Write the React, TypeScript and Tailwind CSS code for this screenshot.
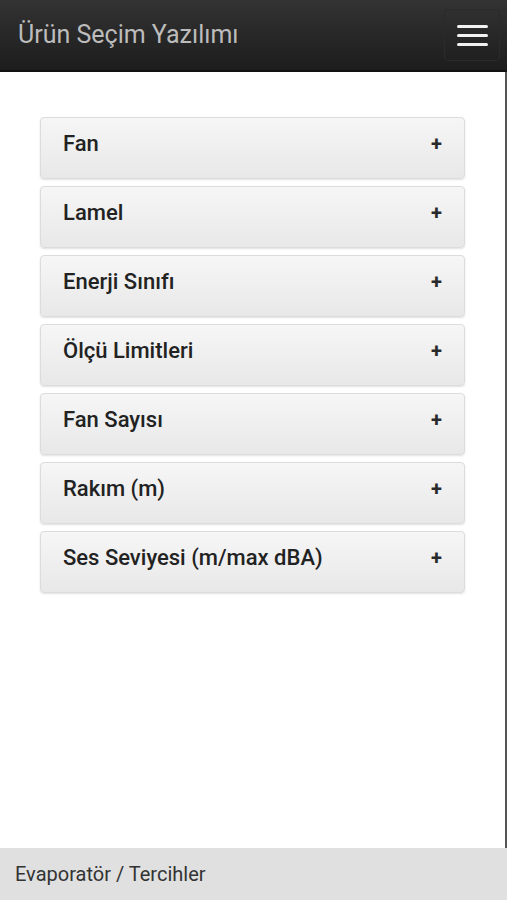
export default function App() {
  const items = [
    "Fan",
    "Lamel",
    "Enerji Sınıfı",
    "Ölçü Limitleri",
    "Fan Sayısı",
    "Rakım (m)",
    "Ses Seviyesi (m/max dBA)",
  ];

  return (
    <div className="flex h-[900px] w-[507px] flex-col bg-white font-['Roboto',sans-serif]">
      {/* top bar */}
      <header className="flex h-[72px] shrink-0 items-center justify-between border-b-2 border-[#111] bg-gradient-to-b from-[#333] to-[#1d1d1d] pl-[18px] pr-[7px]">
        <h1 className="text-[25px] font-normal text-[#bcbcbc]">Ürün Seçim Yazılımı</h1>
        <button className="flex h-[52px] w-[56px] flex-col items-center justify-center gap-[6px] rounded border border-[#2a2a2a]">
          <span className="h-[3px] w-[31px] rounded-sm bg-[#f2f2f2]" />
          <span className="h-[3px] w-[31px] rounded-sm bg-[#f2f2f2]" />
          <span className="h-[3px] w-[31px] rounded-sm bg-[#f2f2f2]" />
        </button>
      </header>

      {/* accordion list */}
      <main className="flex-1 border-r-2 border-[#555] px-[40px] pt-[45px]">
        <div className="flex flex-col gap-[7px]">
          {items.map((label) => (
            <div
              key={label}
              className="flex h-[62px] items-start justify-between rounded border border-[#dcdcdc] bg-gradient-to-b from-[#f6f6f6] to-[#e8e8e8] pl-[22px] pr-[22px] pt-[11px] shadow-[0_1px_2px_rgba(0,0,0,0.12)]"
            >
              <span className="text-[22px] font-medium leading-[30px] text-[#222]">{label}</span>
              <span className="text-[20px] font-bold leading-[30px] text-[#2a2a2a]">+</span>
            </div>
          ))}
        </div>
      </main>

      {/* footer */}
      <footer className="flex h-[52px] shrink-0 items-center bg-[#e0e0e0] pl-[15px]">
        <span className="text-[20px] text-[#333]">Evaporatör / Tercihler</span>
      </footer>
    </div>
  );
}
